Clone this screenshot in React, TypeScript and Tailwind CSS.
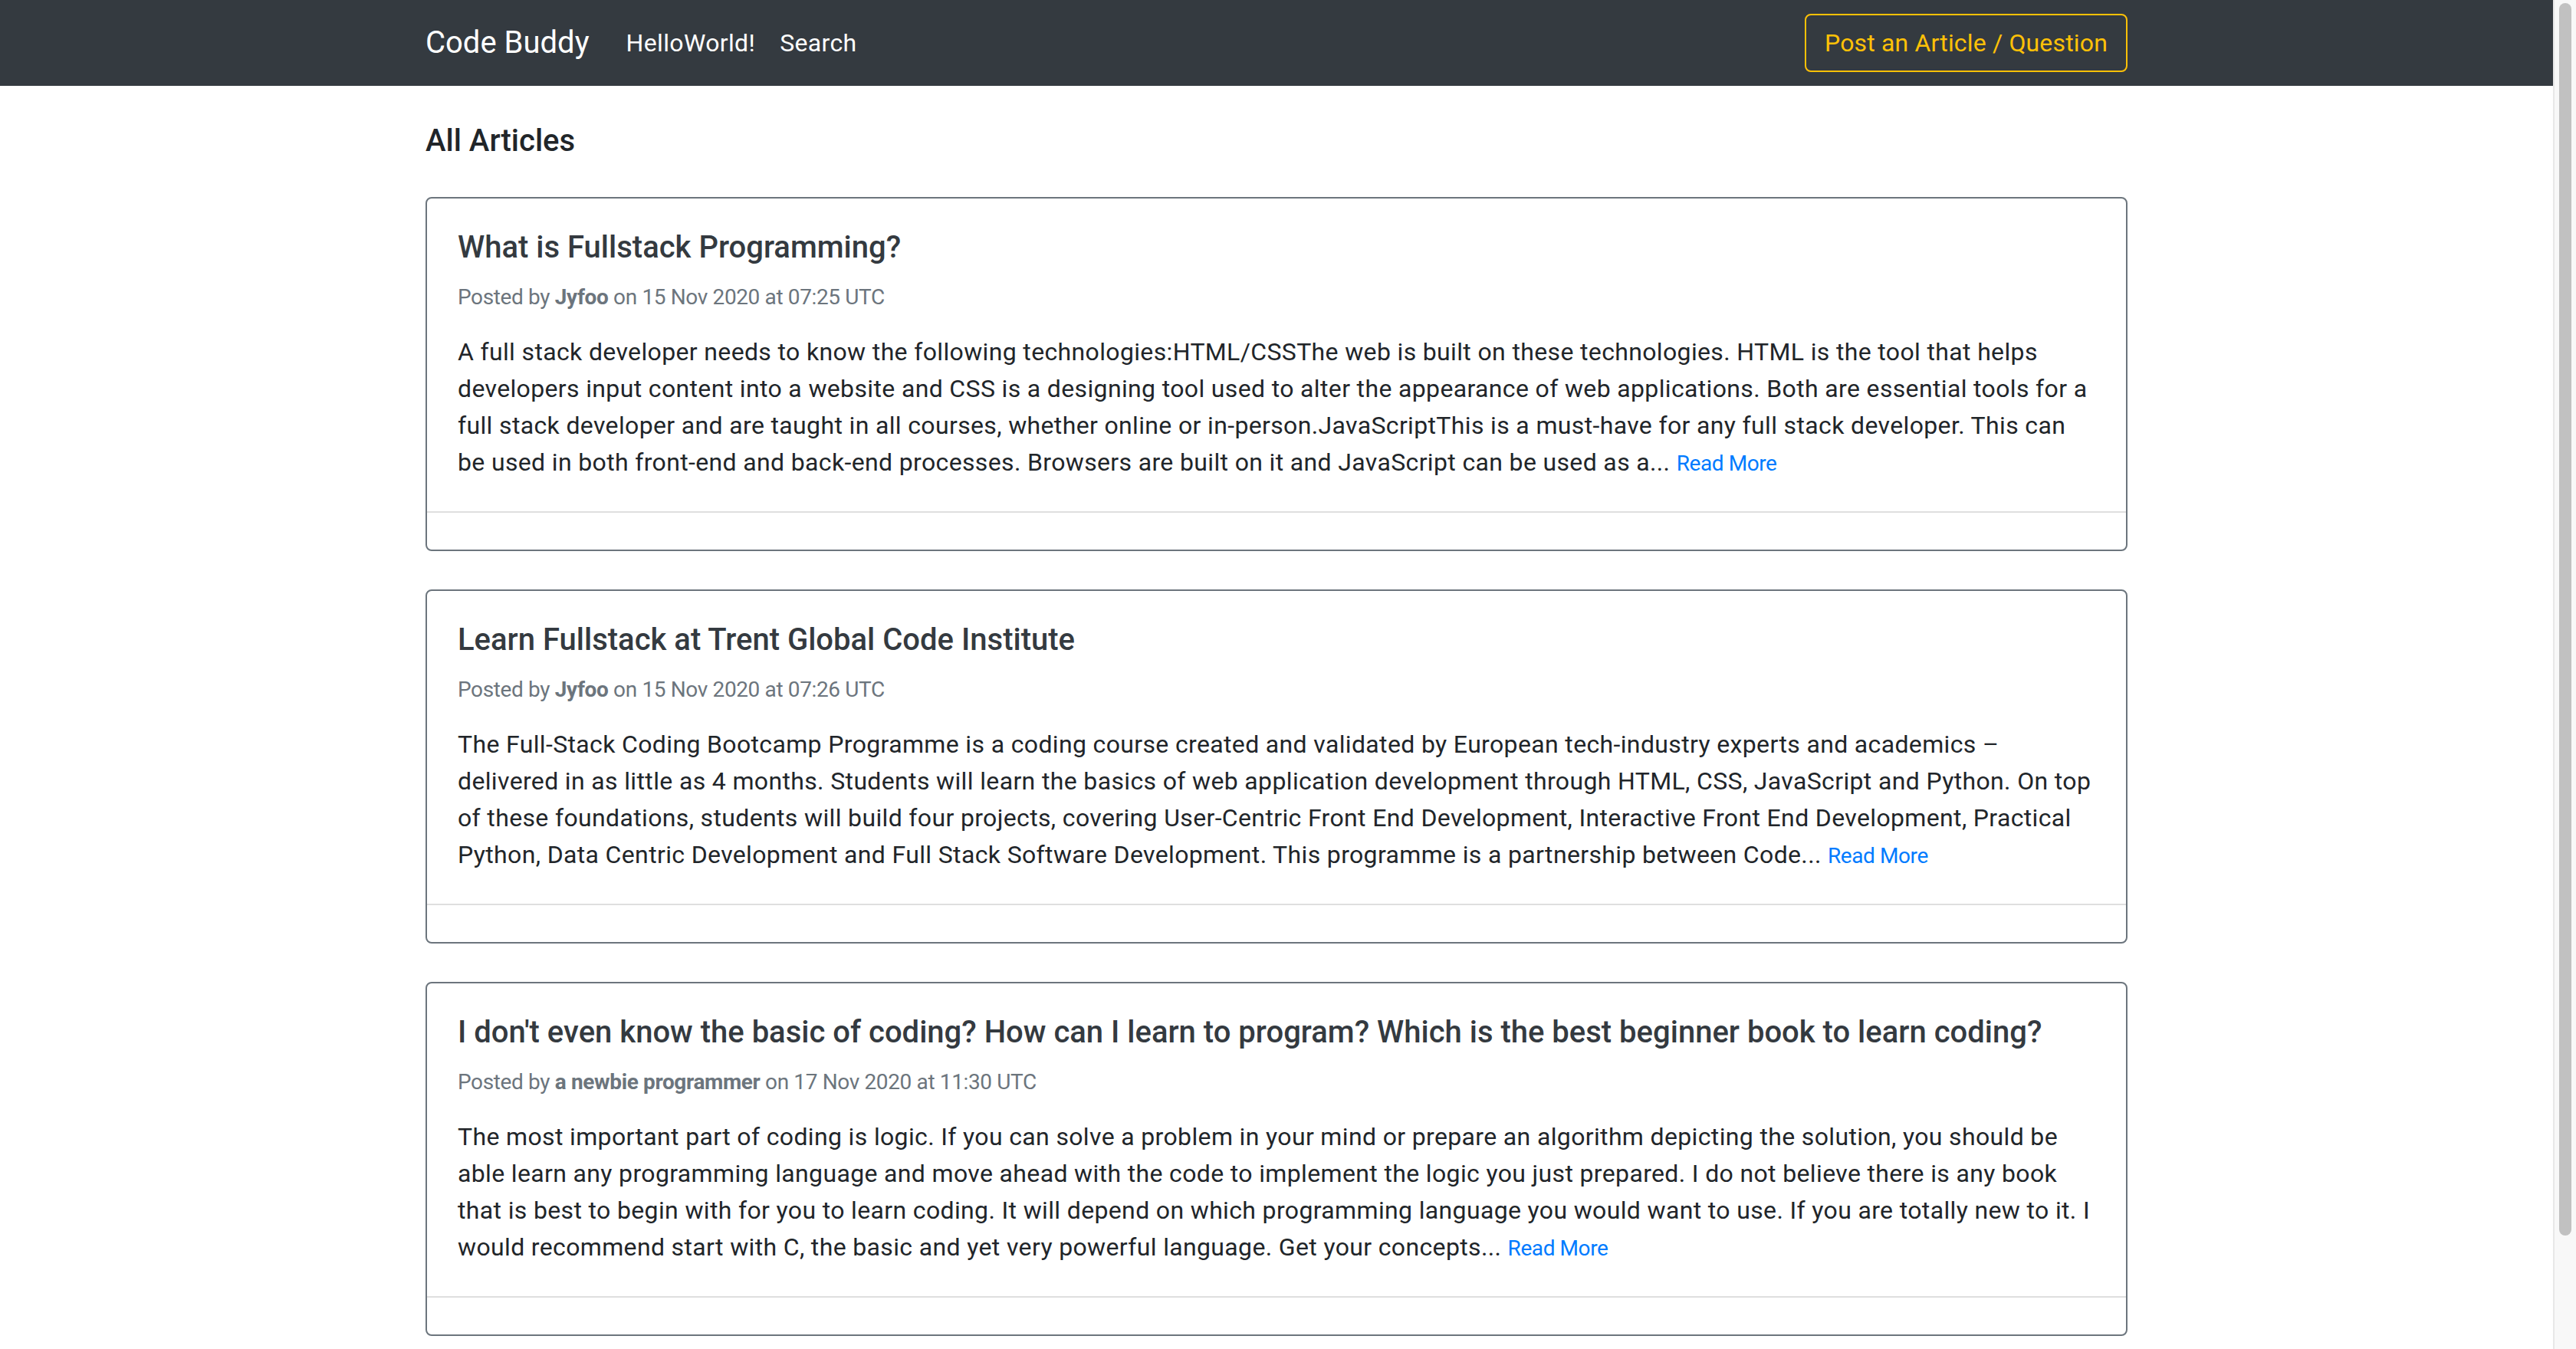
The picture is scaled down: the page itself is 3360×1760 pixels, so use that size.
import React from 'react';

type Article = {
  id: number;
  title: string;
  author: string;
  date: string;
  excerpt: string;
};

const articles: Article[] = [
  {
    id: 1,
    title: 'What is Fullstack Programming?',
    author: 'Jyfoo',
    date: '15 Nov 2020 at 07:25 UTC',
    excerpt:
      'A full stack developer needs to know the following technologies:HTML/CSSThe web is built on these technologies. HTML is the tool that helps developers input content into a website and CSS is a designing tool used to alter the appearance of web applications. Both are essential tools for a full stack developer and are taught in all courses, whether online or in-person.JavaScriptThis is a must-have for any full stack developer. This can be used in both front-end and back-end processes. Browsers are built on it and JavaScript can be used as a...',
  },
  {
    id: 2,
    title: 'Learn Fullstack at Trent Global Code Institute',
    author: 'Jyfoo',
    date: '15 Nov 2020 at 07:26 UTC',
    excerpt:
      'The Full-Stack Coding Bootcamp Programme is a coding course created and validated by European tech-industry experts and academics \u2013 delivered in as little as 4 months. Students will learn the basics of web application development through HTML, CSS, JavaScript and Python. On top of these foundations, students will build four projects, covering User-Centric Front End Development, Interactive Front End Development, Practical Python, Data Centric Development and Full Stack Software Development. This programme is a partnership between Code...',
  },
  {
    id: 3,
    title:
      "I don't even know the basic of coding? How can I learn to program? Which is the best beginner book to learn coding?",
    author: 'a newbie programmer',
    date: '17 Nov 2020 at 11:30 UTC',
    excerpt:
      'The most important part of coding is logic. If you can solve a problem in your mind or prepare an algorithm depicting the solution, you should be able learn any programming language and move ahead with the code to implement the logic you just prepared. I do not believe there is any book that is best to begin with for you to learn coding. It will depend on which programming language you would want to use. If you are totally new to it. I would recommend start with C, the basic and yet very powerful language. Get your concepts...',
  },
];

function ArticleCard({ article }: { article: Article }) {
  return (
    <div className="mb-[50px] border-2 border-[#6c757d] rounded-[8px] bg-white">
      <div className="px-[40px] pt-[40px] pb-[40px]">
        <h5 className="text-[40px] leading-[48px] font-medium text-[#343a40]">{article.title}</h5>
        <p className="mt-[20px] text-[28px] leading-[42px] tracking-[-0.013em] text-[#6c757d]">
          Posted by <span className="font-bold">{article.author}</span> on {article.date}
        </p>
        <p className="mt-[26px] text-[32px] leading-[48px] tracking-[0.011em] text-[#212529]">
          {article.excerpt}{' '}
          <a href="#" className="text-[28px] leading-none tracking-[-0.015em] text-[#007bff]">
            Read More
          </a>
        </p>
      </div>
      <div className="h-[50px] border-t-2 border-[#dfdfdf]" />
    </div>
  );
}

export default function App() {
  return (
    <div className="flex h-[1760px] overflow-hidden bg-white font-[Roboto,ui-sans-serif,sans-serif]">
      <div className="flex-1 min-w-0 flex flex-col">
        <nav className="h-[112px] bg-[#343a40] shrink-0">
          <div className="w-[2220px] mx-auto h-full flex items-center justify-between">
            <div className="flex items-center">
              <a href="#" className="text-[40px] leading-[60px] text-white mr-[32px]">
                Code Buddy
              </a>
              <a href="#" className="px-[16px] text-[32px] leading-[48px] tracking-[0.011em] text-white">
                HelloWorld!
              </a>
              <a href="#" className="px-[16px] text-[32px] leading-[48px] tracking-[0.011em] text-white">
                Search
              </a>
            </div>
            <button className="h-[76px] px-[24px] border-2 border-[#ffc107] rounded-[8px] text-[32px] tracking-[0.005em] text-[#ffc107]">
              Post an Article / Question
            </button>
          </div>
        </nav>

        <main className="w-[2220px] mx-auto">
          <h4 className="mt-[48px] mb-[49px] text-[40px] leading-[48px] font-medium text-[#212529]">
            All Articles
          </h4>
          {articles.map((a) => (
            <ArticleCard key={a.id} article={a} />
          ))}
        </main>
      </div>

      {/* scrollbar */}
      <div className="w-[30px] shrink-0 bg-[#f8f8f8] border-l-2 border-[#e8e8e8] pt-[4px] flex justify-center">
        <div className="w-[16px] h-[1608px] rounded-full bg-[#c1c1c1]" />
      </div>
    </div>
  );
}
